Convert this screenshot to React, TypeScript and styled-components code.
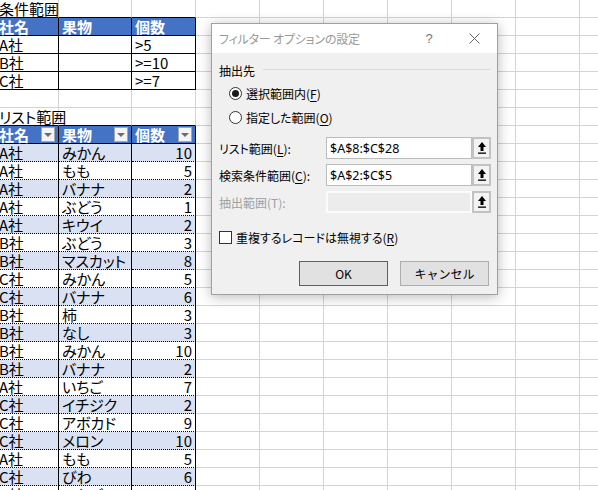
import React from 'react';
import styled, { createGlobalStyle } from 'styled-components';

const GlobalStyle = createGlobalStyle`
  html, body {
    margin: 0;
    padding: 0;
    background: #ffffff;
  }
  body {
    font-family: "Noto Sans CJK JP", "Noto Sans", sans-serif;
    font-feature-settings: "palt";
  }
`;

const COLS = [59, 73, 64, 64, 64, 64, 64, 64, 64, 64];
const GRID = '1px solid #d4d4d4';
const SOLID = '1px solid #000000';
const DOTTED = '1px dotted #000000';

type RowKind = 'plain' | 'caption' | 'critHead' | 'crit' | 'listHead' | 'data';

type SheetRow = { kind: RowKind; cells: string[]; band?: boolean };

const critRows = [
  ['A社', '', '>5'],
  ['B社', '', '>=10'],
  ['C社', '', '>=7'],
];

const listRows = [
  ['A社', 'みかん', '10'],
  ['A社', 'もも', '5'],
  ['A社', 'バナナ', '2'],
  ['A社', 'ぶどう', '1'],
  ['A社', 'キウイ', '2'],
  ['B社', 'ぶどう', '3'],
  ['B社', 'マスカット', '8'],
  ['C社', 'みかん', '5'],
  ['C社', 'バナナ', '6'],
  ['B社', '柿', '3'],
  ['B社', 'なし', '3'],
  ['B社', 'みかん', '10'],
  ['B社', 'バナナ', '2'],
  ['A社', 'いちご', '7'],
  ['C社', 'イチジク', '2'],
  ['C社', 'アボカド', '9'],
  ['C社', 'メロン', '10'],
  ['A社', 'もも', '5'],
  ['C社', 'びわ', '6'],
  ['C社', 'いちご', '4'],
];

const sheetRows: SheetRow[] = [
  { kind: 'caption', cells: ['条件範囲'] },
  { kind: 'critHead', cells: ['社名', '果物', '個数'] },
  ...critRows.map((cells) => ({ kind: 'crit' as RowKind, cells })),
  { kind: 'plain', cells: [] },
  { kind: 'caption', cells: ['リスト範囲'] },
  { kind: 'listHead', cells: ['社名', '果物', '個数'] },
  ...listRows.map((cells, i) => ({ kind: 'data' as RowKind, cells, band: i % 2 === 0 })),
];

const Page = styled.div`
  position: relative;
  width: 598px;
  height: 490px;
  overflow: hidden;
  background: #ffffff;
`;

const Sheet = styled.div`
  display: flex;
  flex-direction: column;
`;

const Row = styled.div`
  display: flex;
  height: 18px;
`;

const Cell = styled.div<{
  $w: number;
  $right: string;
  $bottom: string;
  $bg: string;
  $head: boolean;
  $numeric: boolean;
}>`
  box-sizing: border-box;
  flex: 0 0 ${(p) => p.$w}px;
  height: 18px;
  display: flex;
  align-items: center;
  justify-content: ${(p) => (p.$numeric ? 'flex-end' : 'space-between')};
  padding: 0 3px 0 3px;
  border-right: ${(p) => p.$right};
  border-bottom: ${(p) => p.$bottom};
  background: ${(p) => p.$bg};
  color: ${(p) => (p.$head ? '#ffffff' : '#000000')};
  font-weight: ${(p) => (p.$head ? 700 : 400)};
  font-size: 15px;
  line-height: 17px;
  white-space: nowrap;
  min-width: 0;
`;

const CellText = styled.span<{ $lead: boolean }>`
  margin-left: ${(p) => (p.$lead ? '-4px' : '0')};
`;

const FilterButton = styled.span`
  box-sizing: border-box;
  flex: 0 0 14px;
  width: 14px;
  height: 15px;
  border: 1px solid #a6a6a6;
  background: #f4f4f4;
  display: flex;
  align-items: center;
  justify-content: center;
  &::after {
    content: '';
    width: 0;
    height: 0;
    border-left: 4px solid transparent;
    border-right: 4px solid transparent;
    border-top: 4px solid #6b6b6b;
  }
`;

function cellLook(kind: RowKind, col: number, band?: boolean) {
  const inTable = col < 3;
  let right = GRID;
  let bottom = GRID;
  let bg = 'transparent';
  let head = false;
  if (inTable) {
    if (kind === 'caption') {
      bottom = SOLID;
    } else if (kind === 'critHead' || kind === 'listHead') {
      right = SOLID;
      bottom = SOLID;
      bg = '#4472c4';
      head = true;
    } else if (kind === 'crit') {
      right = SOLID;
      bottom = SOLID;
    } else if (kind === 'data') {
      right = SOLID;
      bottom = DOTTED;
      bg = band ? '#d9e1f2' : '#ffffff';
    }
  }
  return { right, bottom, bg, head };
}

const Dialog = styled.div`
  position: absolute;
  left: 211px;
  top: 23px;
  width: 287px;
  height: 272px;
  box-sizing: border-box;
  border: 1px solid #a0a0a0;
  background: #f0f0f0;
  box-shadow: 0 2px 12px rgba(0, 0, 0, 0.28);
  display: flex;
  flex-direction: column;
  font-family: "Noto Sans CJK JP", "Noto Sans", sans-serif;
  font-size: 12px;
  color: #000000;
`;

const TitleBar = styled.div`
  height: 29px;
  flex: 0 0 29px;
  background: #ffffff;
  display: flex;
  align-items: center;
  padding: 0 13px 0 7px;
  color: #999999;
`;

const TitleText = styled.span`
  flex: 1;
  font-size: 12px;
  letter-spacing: -0.2px;
`;

const HelpGlyph = styled.span`
  width: 14px;
  text-align: center;
  color: #777777;
  font-family: "Liberation Sans", sans-serif;
  font-size: 13px;
  margin-right: 28px;
`;

const CloseGlyph = styled.span`
  width: 20px;
  height: 20px;
  display: flex;
  align-items: center;
  justify-content: center;
`;

const Body = styled.div`
  flex: 1;
  display: flex;
  flex-direction: column;
  padding: 0 6px 0 7px;
`;

const GroupHeader = styled.div`
  margin-top: 10px;
  height: 16px;
  display: flex;
  align-items: flex-start;
  line-height: 16px;
`;

const GroupRule = styled.div`
  flex: 1;
  height: 1px;
  margin: 6px 0 0 8px;
  background: #dcdcdc;
`;

const OptionRow = styled.label`
  margin-top: 4px;
  height: 20px;
  display: flex;
  align-items: center;
  padding-left: 10px;
`;

const Radio = styled.span<{ $checked: boolean }>`
  box-sizing: border-box;
  width: 13px;
  height: 13px;
  border-radius: 50%;
  border: 1px solid #333333;
  background: #ffffff;
  margin-right: 4px;
  display: flex;
  align-items: center;
  justify-content: center;
  &::after {
    content: '';
    width: 7px;
    height: 7px;
    border-radius: 50%;
    background: ${(p) => (p.$checked ? '#1a1a1a' : 'transparent')};
  }
`;

const Fields = styled.div`
  margin-top: 10px;
  display: flex;
  flex-direction: column;
  gap: 5px;
`;

const FieldRow = styled.div`
  height: 22px;
  display: flex;
  align-items: center;
`;

const FieldLabel = styled.span<{ $disabled?: boolean }>`
  width: 107px;
  color: ${(p) => (p.$disabled ? '#a0a0a0' : '#000000')};
`;

const FieldInput = styled.div<{ $disabled?: boolean }>`
  box-sizing: border-box;
  width: 146px;
  height: 22px;
  border: ${(p) => (p.$disabled ? '2px solid #fbfbfb' : '1px solid #bcbcbc')};
  background: ${(p) => (p.$disabled ? '#ececec' : '#ffffff')};
  display: flex;
  align-items: center;
  padding-left: 3px;
  font-family: "Noto Sans", sans-serif;
  font-size: 12.5px;
`;

const PickButton = styled.div`
  box-sizing: border-box;
  width: 19px;
  height: 22px;
  border: 2px solid #c2c2c2;
  background: #f3f3f3;
  display: flex;
  align-items: center;
  justify-content: center;
`;

const CheckRow = styled.label`
  margin-top: 16px;
  height: 16px;
  display: flex;
  align-items: center;
`;

const CheckBox = styled.span`
  box-sizing: border-box;
  width: 13px;
  height: 13px;
  border: 1px solid #333333;
  background: #ffffff;
  margin-right: 4px;
`;

const ButtonRow = styled.div`
  margin-top: 16px;
  display: flex;
  justify-content: flex-end;
  gap: 12px;
  padding-right: 2px;
`;

const DialogButton = styled.button<{ $default?: boolean }>`
  box-sizing: border-box;
  width: 89px;
  height: 25px;
  border: 1px solid ${(p) => (p.$default ? '#0078d7' : '#adadad')};
  background: #e1e1e1;
  font-family: "Noto Sans CJK JP", "Noto Sans", sans-serif;
  font-size: 12px;
  color: #000000;
  padding: 0;
`;

const Key = styled.span`
  text-decoration: underline;
  text-underline-offset: 2px;
`;

const UpArrow = () => (
  <svg width="10" height="14" viewBox="0 0 10 14">
    <polygon points="5,1 9,6 6.5,6 6.5,10 3.5,10 3.5,6 1,6" fill="#000000" />
    <rect x="1" y="11.5" width="8" height="1.3" fill="#000000" />
  </svg>
);

const CloseIcon = () => (
  <svg width="11" height="11" viewBox="0 0 11 11">
    <path d="M0.5 0.5 L10.5 10.5 M10.5 0.5 L0.5 10.5" stroke="#666666" strokeWidth="1" />
  </svg>
);

const FilterDialog = () => (
  <Dialog>
    <TitleBar>
      <TitleText>フィルター オプションの設定</TitleText>
      <HelpGlyph>?</HelpGlyph>
      <CloseGlyph>
        <CloseIcon />
      </CloseGlyph>
    </TitleBar>
    <Body>
      <GroupHeader>
        <span>抽出先</span>
        <GroupRule />
      </GroupHeader>
      <OptionRow>
        <Radio $checked />
        <span>
          選択範囲内(<Key>F</Key>)
        </span>
      </OptionRow>
      <OptionRow>
        <Radio $checked={false} />
        <span>
          指定した範囲(<Key>O</Key>)
        </span>
      </OptionRow>
      <Fields>
        <FieldRow>
          <FieldLabel>
            リスト範囲(<Key>L</Key>):
          </FieldLabel>
          <FieldInput>$A$8:$C$28</FieldInput>
          <PickButton>
            <UpArrow />
          </PickButton>
        </FieldRow>
        <FieldRow>
          <FieldLabel>
            検索条件範囲(<Key>C</Key>):
          </FieldLabel>
          <FieldInput>$A$2:$C$5</FieldInput>
          <PickButton>
            <UpArrow />
          </PickButton>
        </FieldRow>
        <FieldRow>
          <FieldLabel $disabled>抽出範囲(T):</FieldLabel>
          <FieldInput $disabled />
          <PickButton>
            <UpArrow />
          </PickButton>
        </FieldRow>
      </Fields>
      <CheckRow>
        <CheckBox />
        <span>
          重複するレコードは無視する(<Key>R</Key>)
        </span>
      </CheckRow>
      <ButtonRow>
        <DialogButton $default>OK</DialogButton>
        <DialogButton>キャンセル</DialogButton>
      </ButtonRow>
    </Body>
  </Dialog>
);

const App = () => {
  return (
    <Page>
      <GlobalStyle />
      <Sheet>
        {sheetRows.map((row, r) => (
          <Row key={r}>
            {COLS.map((w, c) => {
              const look = cellLook(row.kind, c, row.band);
              const text = row.cells[c] ?? '';
              const numeric = row.kind === 'data' && c === 2;
              return (
                <Cell
                  key={c}
                  $w={w}
                  $right={look.right}
                  $bottom={look.bottom}
                  $bg={look.bg}
                  $head={look.head}
                  $numeric={numeric}
                >
                  {text && <CellText $lead={c === 0}>{text}</CellText>}
                  {row.kind === 'listHead' && c < 3 && <FilterButton />}
                </Cell>
              );
            })}
          </Row>
        ))}
      </Sheet>
      <FilterDialog />
    </Page>
  );
};

export default App;
